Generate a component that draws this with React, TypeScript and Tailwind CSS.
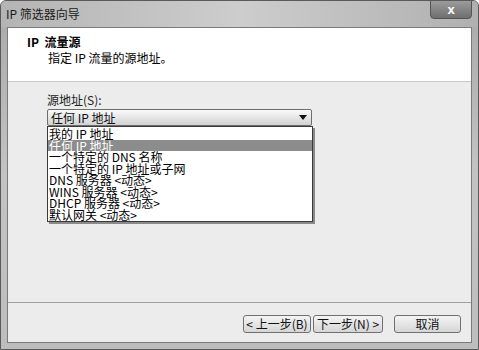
import React from 'react';

const ITEMS = [
  '我的 IP 地址',
  '任何 IP 地址',
  '一个特定的 DNS 名称',
  '一个特定的 IP 地址或子网',
  'DNS 服务器 <动态>',
  'WINS 服务器 <动态>',
  'DHCP 服务器 <动态>',
  '默认网关 <动态>',
];

const FONT = "font-['SimSun','Noto_Sans_CJK_SC',sans-serif]";

function WizButton({ children, className = '' }: { children: React.ReactNode; className?: string }) {
  return (
    <button
      type="button"
      className={`h-[18px] rounded-[3px] border border-[#707070] bg-gradient-to-b from-[#f4f4f4] to-[#d6d6d6] text-[12px] leading-none text-[#111] flex items-center justify-center ${className}`}
    >
      {children}
    </button>
  );
}

export default function App() {
  return (
    <div
      className={`w-[479px] h-[350px] flex flex-col bg-gradient-to-b from-[#a9a9a9] via-[#c3c3c3] to-[#bdbdbd] border border-[#5a5a5a] rounded-t-[6px] overflow-hidden ${FONT}`}
    >
      {/* title bar */}
      <div className="relative h-[26px] shrink-0 flex items-center pl-[5px] bg-gradient-to-r from-[#b4b4b4] via-[#cdcdcd] to-[#b0b0b0]">
        <span className="text-[12px] text-[#1a1a1a] font-['Noto_Sans_CJK_SC',sans-serif]">IP 筛选器向导</span>
        <div className="absolute right-[6px] top-[-1px] w-[42px] h-[19px] rounded-b-[4px] border border-[#555] bg-gradient-to-b from-[#9c9c9c] to-[#6f6f6f] flex items-center justify-center">
          <span className="text-[13px] font-bold text-white leading-none font-['Liberation_Sans',sans-serif]">x</span>
        </div>
      </div>

      {/* client area */}
      <div className="flex-1 mx-[6px] mb-[6px] flex flex-col border border-[#7a7a7a] bg-[#ececec]">
        <div className="h-[54px] shrink-0 bg-white border-b border-[#c8c8c8] pl-[19px] pt-[6px] text-[12px] leading-[16px] text-black">
          <div className="font-bold">IP&nbsp; 流量源</div>
          <div className="pl-[21px]">指定 IP 流量的源地址。</div>
        </div>

        <div className="flex-1 relative pl-[39px] pt-[10px]">
          <div className="text-[12px] leading-[16px] text-[#222]">源地址(S):</div>
          <div className="mt-[1px] w-[265px] h-[17px] border border-[#6e6e6e] rounded-[2px] bg-gradient-to-b from-[#fafafa] to-[#d2d2d2] flex items-center pl-[3px] pr-[4px] justify-between">
            <span className="text-[12px] leading-none text-[#111]">任何 IP 地址</span>
            <svg width="8" height="5" viewBox="0 0 8 5">
              <path d="M0 0 L8 0 L4 5 Z" fill="#111" />
            </svg>
          </div>
          {/* open dropdown list, drawn over the page */}
          <div className="absolute left-[39px] top-[44px] w-[266px] bg-white border border-[#3a3a3a] shadow-[2px_2px_0_#8a8a8a] py-[1px]">
            {ITEMS.map((t, i) => (
              <div
                key={t}
                className={`h-[11.5px] leading-[11.5px] pl-[1px] text-[12px] whitespace-pre ${
                  i === 1 ? 'bg-[#8c8c8c] text-white' : 'text-black'
                }`}
              >
                {t}
              </div>
            ))}
          </div>
        </div>

        <div className="h-[40px] shrink-0 border-t border-[#a0a0a0] flex items-start justify-end pt-[12px] pr-[10px]">
          <WizButton className="w-[68px]">&lt; 上一步(B)</WizButton>
          <WizButton className="w-[70px] ml-[2px]">下一步(N) &gt;</WizButton>
          <WizButton className="w-[67px] ml-[11px]">取消</WizButton>
        </div>
      </div>
    </div>
  );
}
